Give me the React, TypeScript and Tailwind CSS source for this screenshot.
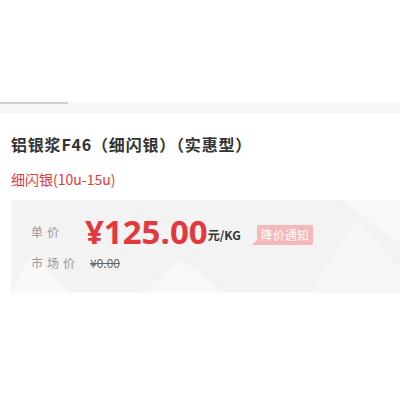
const FONT = "font-['Microsoft_YaHei','Noto_Sans_CJK_SC',sans-serif]";

function PanelBg() {
  return (
    <svg className="pointer-events-none absolute inset-0 h-full w-full" viewBox="0 0 389 94" preserveAspectRatio="none">
      <polygon points="0,94 20,55 60,94" fill="#ffffff" opacity="0.5" />
      <polygon points="130,94 170,60 215,94" fill="#ffffff" opacity="0.45" />
      <polygon points="300,94 345,20 389,70 389,94" fill="#ffffff" opacity="0.35" />
      <polygon points="330,0 389,0 389,45" fill="#ffffff" opacity="0.4" />
    </svg>
  );
}

export default function App() {
  return (
    <div className={`h-[400px] w-[400px] overflow-hidden bg-white ${FONT}`}>
      <div className="h-[102px]" />
      {/* tab strip */}
      <div className="flex h-[11px] bg-[#f7f7f7]">
        <div className="h-[2px] w-[68px] bg-[#d0d0d0]" />
      </div>

      <div className="pl-[11px] pt-[20px]">
        <h1 className="text-[16px] font-bold leading-[22px] tracking-[0.8px] text-[#333]">
          铝银浆F46（细闪银）（实惠型）
        </h1>
        <p className="mt-[15px] text-[14px] leading-[18px] text-[#e4393c]">细闪银(10u-15u)</p>

        <div className="relative mt-[12px] h-[93px] bg-[#f3f3f3] pl-[20px] pt-[14px]">
          <PanelBg />
          <div className="relative flex items-center">
            <span className="w-[54px] text-[12px] tracking-[4px] text-[#999]">单价</span>
            <span className="text-[33px] font-bold leading-[36px] text-[#e4393c] font-['Open_Sans','Noto_Sans_CJK_SC',sans-serif]">
              ¥125.00
            </span>
            <span className="mt-[6px] text-[12px] font-bold text-[#333]">元/KG</span>
            <span className="relative ml-[16px] mt-[5px] rounded-[2px] bg-[#f5b7b8] px-[4px] text-[12px] leading-[20px] text-white">
              降价通知
              <span className="absolute -left-[5px] bottom-0 h-0 w-0 border-b-[6px] border-l-[6px] border-b-[#f5b7b8] border-l-transparent" />
            </span>
          </div>
          <div className="relative mt-[4px] flex items-center">
            <span className="w-[59px] text-[12px] tracking-[4px] text-[#999]">市场价</span>
            <span className="text-[12px] text-[#666] line-through">¥0.00</span>
          </div>
        </div>
      </div>
    </div>
  );
}
